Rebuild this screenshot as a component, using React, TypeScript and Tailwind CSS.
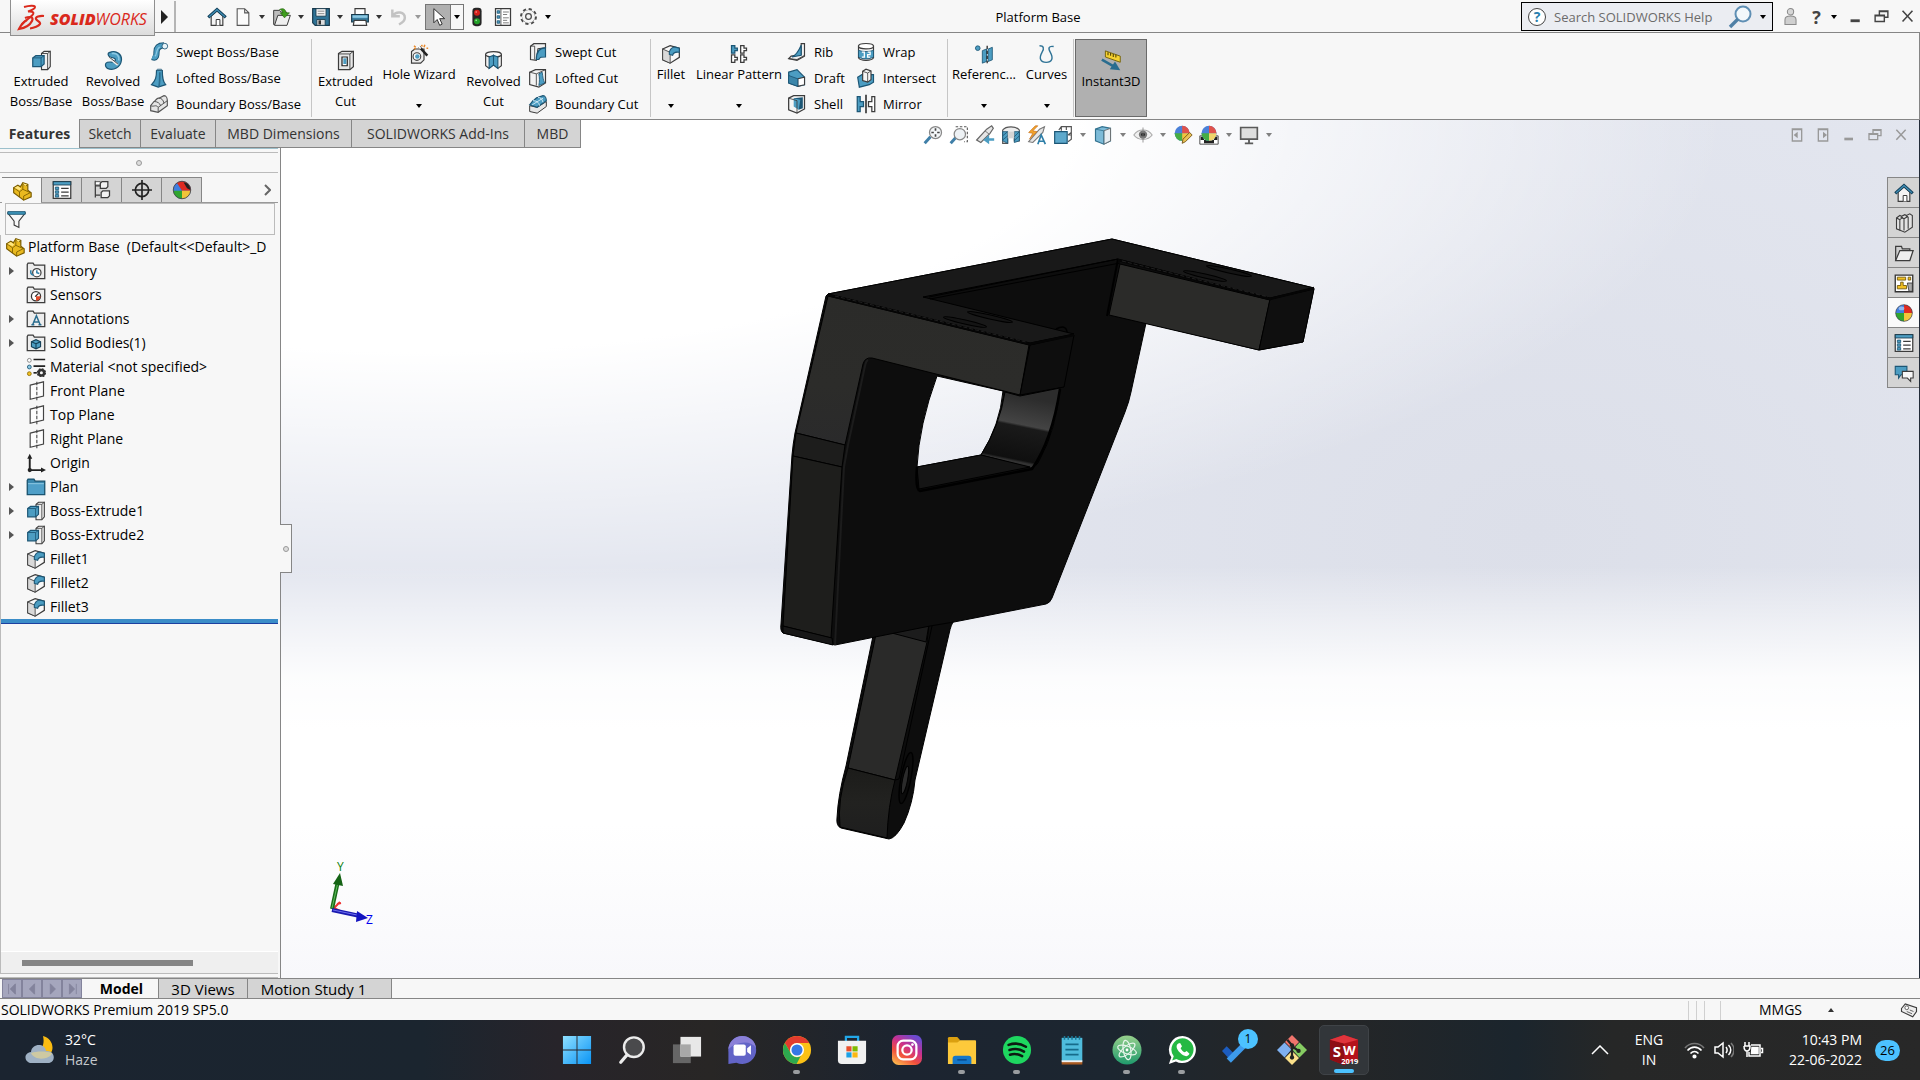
import React from "react";

type IconProps = { name: string; size?: number };

const O = "#3c3c3c";
const B = "#4c9dc2";
const D = "#1c5675";
const L = "#8cc8e2";

const glyphs: Record<string, React.ReactNode> = {
  home: (
    <>
      <path d="M5 11v11h14V11l-7-6z" fill="#f4f4f4" stroke={O} strokeWidth="1.4" />
      <path d="M1.5 12.5L12 3l10.5 9.5" fill="none" stroke="#123f59" strokeWidth="3.6" />
      <path d="M2.5 11.8L12 3.2l9.500 8.600" fill="none" stroke="#3f8db3" strokeWidth="1.5" />
      <path d="M11 22v-7h4.500v7" fill="#fff" stroke={O} strokeWidth="1.2" />
    </>
  ),
  doc: <path d="M5 2h9l5 5v15H5zM14 2v5h5" fill="#fbfbfb" stroke="#555" strokeWidth="1.3" />,
  open: (
    <>
      <path d="M2 21V4h7l2 2h6v15z" fill="#bdbdbd" stroke={O} strokeWidth="1.2" />
      <path d="M3 22l4-12h15l-4 12z" fill="#efefef" stroke={O} strokeWidth="1.2" />
      <path d="M9 3c4-2 7-1 8 4h4l-6 6-5-6h3c0-2-2-4-4-4z" fill="#3f9d1e" stroke="#22630b" strokeWidth=".8" />
    </>
  ),
  save: (
    <>
      <path d="M2 2h20v20H5l-3-3z" fill="#2f7396" stroke="#17384b" strokeWidth="1.4" />
      <path d="M6 2h12v9H6z" fill="#f5f5f5" stroke="#17384b" />
      <path d="M8 5h8M8 8h8" stroke="#777" />
      <path d="M7 15h10v7H7z" fill="#ddd" stroke="#17384b" />
      <path d="M9 16h3v5H9z" fill="#333" />
    </>
  ),
  print: (
    <>
      <path d="M6 2h12v8H6z" fill="#fff" stroke={O} strokeWidth="1.4" />
      <path d="M2 9h20v9H2z" fill="#3a80a3" stroke="#17384b" strokeWidth="1.4" />
      <path d="M3 10h18v3H3z" fill="#8cc8e2" />
      <path d="M5 16h14l1 6H4z" fill="#fff" stroke={O} strokeWidth="1.4" />
    </>
  ),
  undo: <path d="M4 3v8h9M4.500 10.500C9 4 19 6 19 13c0 4-3 6-7 8" fill="none" stroke="#c3c3c3" strokeWidth="3" />,
  cursor: <path d="M7 2v17l4-4 3 7 3-1.500-3-6.500h6z" fill="#fff" stroke="#333" strokeWidth="1.200" />,
  traffic: (
    <>
      <rect x="6.500" y="1" width="11" height="22" rx="4" fill="#262626" />
      <circle cx="12" cy="7" r="3.600" fill="#d4201c" />
      <circle cx="12" cy="17" r="3.600" fill="#24a12a" />
      <circle cx="11" cy="6" r="1" fill="#ff9a90" />
      <circle cx="11" cy="16" r="1" fill="#a5efa5" />
    </>
  ),
  options: (
    <>
      <path d="M3 2h18v20H3z" fill="#fff" stroke={O} strokeWidth="1.500" />
      <path d="M9.500 2v20" stroke={O} />
      <path d="M12 6h7M12 9h5M12 13h7M12 16h5M12 19h7" stroke="#666" />
      <path d="M5 4.500h3v3H5zM5 10.500h3v3H5zM5 16.500h3v3H5z" fill={B} stroke={D} />
    </>
  ),
  gear: (
    <>
      <circle cx="12" cy="12" r="7.800" fill="none" stroke="#4a4a4a" strokeWidth="1.300" />
      <circle cx="12" cy="12" r="9.500" fill="none" stroke="#4a4a4a" strokeWidth="2.400" strokeDasharray="4 3.460" />
      <circle cx="12" cy="12" r="8.200" fill="#f5f5f5" />
      <circle cx="12" cy="12" r="3.600" fill="none" stroke="#4a4a4a" strokeWidth="1.600" />
    </>
  ),
  extrude: (
    <>
      <path d="M12 4l3-2.500h7V19l-3 3.500h-7z" fill="#f0f0f0" stroke={O} strokeWidth="1.300" />
      <path d="M12 4h7v18M19 4l3-2.500" fill="none" stroke={O} />
      <path d="M2 9l3.500-2.500H15V16l-3.500 3H2z" fill={B} stroke={D} strokeWidth="1.400" />
      <path d="M2 9h9.500v10M11.500 9L15 6.500" fill="none" stroke={D} />
    </>
  ),
  revolve: (
    <>
      <path d="M7 3c9-4 15 3 14 9-1 8-9 12-16 9-3-2-3-6 0-7 3-1 8 1 9-2 1-3-3-3-6-4-2-1-3-4-1-5z" fill={B} stroke={D} strokeWidth="1.400" />
      <path d="M10 4c6-1 9 3 8 8" fill="none" stroke={L} strokeWidth="2" />
      <path d="M7 9l10 8" stroke="#eee" strokeWidth="2.500" />
      <path d="M7 8l10 8" stroke="#333" strokeWidth="1" />
    </>
  ),
  sweep: (
    <>
      <path d="M4 18c5 2 5-2 5-6 0-6 4-8 9-8" fill="none" stroke={D} strokeWidth="7.500" />
      <path d="M4 18c5 2 5-2 5-6 0-6 4-8 9-8" fill="none" stroke={B} strokeWidth="5.200" />
      <path d="M7 17c3-1 1-9 6-11" fill="none" stroke={L} strokeWidth="1.500" />
      <circle cx="19" cy="5" r="3.400" fill="#e8f4fa" stroke={D} />
    </>
  ),
  loft: (
    <>
      <path d="M9 3c0 8-1 12-6 17l8 3 9-3c-4-4-4-10-4-17z" fill={B} stroke={D} strokeWidth="1.400" />
      <path d="M9 3h7l-1-1.500h-5z" fill="#eef7fb" stroke={D} />
      <path d="M13 5c0 7 0 12-1 17" fill="none" stroke="#2a6d8f" strokeWidth="2" />
    </>
  ),
  boundary: (
    <>
      <path d="M2 14l4-5c2 0 3-5 6-4l6-3c3 0 4 4 4 6v6l-11 8-9-2z" fill="#e5e5e5" stroke="#555" strokeWidth="1.400" />
      <path d="M2 14c4 2 6-2 9 2v6M11 16l11-8M6 9c4 0 7 2 8 5M12 5c3 0 5 2 6 6" fill="none" stroke="#555" strokeWidth="1.200" />
    </>
  ),
  boundaryCut: (
    <>
      <path d="M2 14l9 2 11-7v6l-11 8-9-2z" fill="#e8e8e8" stroke={O} strokeWidth="1.200" />
      <path d="M2 13l4-5c2 0 3-4 6-4l6-2c3 0 4 4 4 6l-11 8z" fill={B} stroke={D} strokeWidth="1.400" />
      <path d="M6 8c4 0 7 2 8 6M12 4c3 0 5 2 6 6M5 13L18 5" fill="none" stroke="#cde8f4" strokeWidth="1.200" />
    </>
  ),
  extrudeCut: (
    <>
      <path d="M4 4l4-2.500h13V19l-4 3.500H4z" fill="#e8e8e8" stroke={O} strokeWidth="1.400" />
      <path d="M4 4.500h13v18M17 4.500l4-3" fill="none" stroke={O} />
      <path d="M8 8h6v10H8z" fill="#fff" stroke="#222" strokeWidth="1.400" />
      <path d="M9.500 9.500H13V16H9.500z" fill={B} />
    </>
  ),
  wizard: (
    <>
      <path d="M3 9l4-3h11v13l-4 4H3z" fill="#ececec" stroke={O} strokeWidth="1.400" />
      <circle cx="9.500" cy="15" r="4.600" fill="#fff" stroke={O} strokeWidth="1.300" />
      <circle cx="10" cy="15" r="2.700" fill={B} />
      <path d="M12 3l10 11" stroke="#222" strokeWidth="3" />
      <path d="M11 2l3 3.500" stroke="#fff" strokeWidth="2" />
      <path d="M6 2l2 2M15 1l1 2M19 1l-1 3M6 6l2-1M21 5h2" stroke="#e8882a" strokeWidth="1.800" />
    </>
  ),
  revolveCut: (
    <>
      <path d="M3 5v13l4 3 5-4 5 4 4-3V5z" fill="#f1f1f1" stroke={O} strokeWidth="1.300" />
      <ellipse cx="12" cy="5" rx="9" ry="3.200" fill="#fafafa" stroke={O} strokeWidth="1.300" />
      <path d="M7 8l5-2v11l-5 4zM17 8l-5-2v11l5 4z" fill={B} stroke={D} strokeWidth="1.200" />
    </>
  ),
  sweepCut: (
    <>
      <path d="M3 5l4-3h14v5l-9 1-2 14-7-1z" fill="#f1f1f1" stroke={O} strokeWidth="1.400" />
      <path d="M3 5h5v16" fill="none" stroke={O} />
      <path d="M21 7C13 7 10 12 10 21h3c1-3 3-3 8-3z" fill={B} stroke={D} strokeWidth="1.400" />
    </>
  ),
  loftCut: (
    <>
      <path d="M2 5l7-3h12v16l-8 5-11-3z" fill="#f3f3f3" stroke={O} strokeWidth="1.400" />
      <path d="M2 5l8 2v14M10 7l11-5" fill="none" stroke={O} />
      <path d="M13 7l4-2c1 6 1 9 3 13l-7 3c1-5 1-9 0-14z" fill={B} stroke={D} />
    </>
  ),
  fillet: (
    <>
      <path d="M2 6l9-4 11 3v11l-11 7-9-4z" fill="#f8f8f8" stroke={O} strokeWidth="1.500" />
      <path d="M2 6l9 4v13l-9-4z" fill="#d9d9d9" stroke={O} />
      <path d="M10 9.500c1-3.500 4-5.500 6-6L22 5v5c-5-1-7.500 1-8 3.500l-4-1z" fill={B} stroke={D} strokeWidth="1.300" />
    </>
  ),
  pattern: (
    <>
      <path d="M3 2h4v3h3v3H7v3H3z" fill={B} stroke={D} strokeWidth="1.500" />
      <path d="M14 2h4v3h3v3h-3v3h-4zM3 13h4v3h3v3H7v3H3zM14 13h4v3h3v3h-3v3h-4z" fill="#fff" stroke={O} strokeWidth="1.500" />
    </>
  ),
  rib: (
    <>
      <path d="M17 2h4v15l-9 5-10-2 3-3 12-2z" fill="#f2f2f2" stroke={O} strokeWidth="1.400" />
      <path d="M17 4v12L6 18c5-2 8-7 11-14z" fill={B} stroke={D} strokeWidth="1.400" />
      <path d="M2 20l10 1 9-5" fill="none" stroke={O} />
    </>
  ),
  draft: (
    <>
      <path d="M2 5l10-3 9 9v9l-8 2-11-4z" fill={B} stroke={D} strokeWidth="1.500" />
      <path d="M13 13l8-2v9l-8 2z" fill="#fff" stroke={O} strokeWidth="1.300" />
      <path d="M2 9l11 4v9L2 18z" fill="#3b86aa" stroke={D} />
    </>
  ),
  shell: (
    <>
      <path d="M2 5l6-3h13v16l-9 5-10-4z" fill="#f5f5f5" stroke={O} strokeWidth="1.500" />
      <path d="M8 5l11-1v13l-5 2z" fill={D} />
      <path d="M8 5l8 2-2 12-6-4z" fill={B} />
      <path d="M2 5l10 3v15" fill="none" stroke={O} />
    </>
  ),
  wrap: (
    <>
      <path d="M3 5v14c2 4 16 4 18 0V5z" fill="#f1f1f1" stroke={O} strokeWidth="1.400" />
      <ellipse cx="12" cy="5" rx="9" ry="3.200" fill="#fff" stroke={O} strokeWidth="1.400" />
      <path d="M3 10c5 2 13 2 18 0v8c-5 3-13 3-18 0z" fill={B} stroke={D} />
      <path d="M7 12h3v6H7M14 12h3v3h-3v3h3" fill="none" stroke="#fff" strokeWidth="1.500" />
    </>
  ),
  intersect: (
    <>
      <path d="M2 11l5-3h14v9l-5 3-12 3z" fill={B} stroke={D} strokeWidth="1.400" />
      <path d="M8 4l4-2.500 6 2V14l-4 3-6-2z" fill="#f5f5f5" stroke={O} strokeWidth="1.400" />
      <path d="M8 4l6 2v11M14 6l4-2.500" fill="none" stroke={O} />
    </>
  ),
  mirror: (
    <>
      <path d="M1.500 3H5v6h4v6H5v6H1.500z" fill={B} stroke={D} strokeWidth="1.500" />
      <path d="M22.500 3H19v6h-4v6h4v6h3.500z" fill="#fff" stroke={O} strokeWidth="1.500" />
      <path d="M12 1v22" stroke="#222" strokeWidth="1.800" />
    </>
  ),
  refgeo: (
    <>
      <circle cx="4.500" cy="5" r="2.800" fill={B} stroke={D} />
      <path d="M10 8l5-2v15l-5 2zM17 6l5-2v15l-5 2z" fill={B} stroke={D} />
      <path d="M15.800 2v21" stroke="#222" strokeWidth="1.500" strokeDasharray="4 2" />
    </>
  ),
  curves: <path d="M3 2c5 0 6 3 3 8-4 7-2 12 5 12s9-5 5-12c-3-5-2-8 4-7" fill="none" stroke="#2f7396" strokeWidth="1.700" />,
  instant: (
    <>
      <path d="M5 1l17 6v7L5 8z" fill="#f5d130" stroke="#6d5a00" />
      <path d="M8 2.500v3.500M11 3.500v3M14 4.500v3.500M17 5.500v3" stroke="#4a3c00" strokeWidth="1.200" />
      <path d="M1 11l14 8" stroke="#2a6d8f" strokeWidth="3" />
      <path d="M22 23l-12-1 6-9z" fill="#2a6d8f" />
    </>
  ),
  zoomfit: (
    <>
      <path d="M2 22l7-8" stroke="#3f7fa8" strokeWidth="3.500" />
      <circle cx="15" cy="9" r="7.200" fill="#f4f7f9" stroke="#888" strokeWidth="1.500" />
      <path d="M15 4v3M15 11v3M10 9h3M17 9h3" stroke="#444" strokeWidth="2" />
    </>
  ),
  zoomarea: (
    <>
      <path d="M2 22l7-8" stroke="#3f7fa8" strokeWidth="3.500" />
      <circle cx="13" cy="11" r="6.800" fill="#eef2f5" stroke="#888" strokeWidth="1.500" />
      <path d="M8 2h14v18h-4" fill="none" stroke="#555" strokeWidth="1.300" strokeDasharray="3 2" />
    </>
  ),
  prev: (
    <>
      <path d="M2 18L14 5l6-4 2 3-4 6L7 21z" fill="#e6e6e6" stroke="#666" strokeWidth="1.400" />
      <path d="M12 7l5 4" stroke="#666" />
      <path d="M23 16h-6v-4l-7 6 7 5v-4h6z" fill={B} />
    </>
  ),
  section: (
    <>
      <path d="M2 6c4-5 16-5 20 0v13h-6V9H8v13H2z" fill="#ededed" stroke="#555" strokeWidth="1.400" />
      <path d="M2 8h6v14l-6-3zM16 8h6v11l-6 2z" fill={B} stroke={D} />
      <path d="M8 8h8v8H8z" fill="#d5d5d5" />
      <path d="M2 13l6-5M2 18l6-5M16 14l6-6M16 19l6-6" stroke="#1c5675" />
    </>
  ),
  dynview: (
    <>
      <path d="M2 20L15 5l6-3-2 7L7 21z" fill="#e6e6e6" stroke="#777" strokeWidth="1.300" />
      <path d="M10 1L2 9l5 1-4 7 9-9-5-1 6-6z" fill="#f4a52d" stroke="#c46a10" strokeWidth=".8" />
      <path d="M13 23l4-11 5 11M14.500 19.500h6" fill="none" stroke="#2f7fa8" strokeWidth="2" />
    </>
  ),
  orient: (
    <>
      <path d="M7 6l3-4h12v15l-4 3M10 2v5M22 9l-4 3M16 2v4M22 12h-4" fill="none" stroke="#555" strokeWidth="1.400" />
      <path d="M2 8h15v14H2z" fill="#5ea9cc" stroke={D} strokeWidth="1.400" />
    </>
  ),
  display: (
    <>
      <path d="M3 5l8-3 10 2v15l-8 4-10-4z" fill="#7dbbd8" stroke="#32728f" strokeWidth="1.400" />
      <path d="M13 7l8-3v15l-8 4z" fill="#e8eef2" stroke="#666" />
      <path d="M3 5l10 2v16" fill="none" stroke="#32728f" />
    </>
  ),
  eye: (
    <>
      <path d="M1 12c5-8 17-8 22 0-5 7-17 7-22 0z" fill="#f0f0f0" stroke="#aaa" strokeWidth="1.300" />
      <circle cx="12" cy="11.500" r="5" fill="#777" />
      <circle cx="12" cy="11.500" r="2.300" fill="#222" />
      <path d="M12 3v18" stroke="#888" />
    </>
  ),
  ball: (
    <>
      <circle cx="12" cy="12" r="10" fill="#3f7fe0" />
      <path d="M12 12V2a10 10 0 0 1 10 10z" fill="#df2b22" />
      <path d="M12 12H2a10 10 0 0 0 10 10z" fill="#31a52f" />
      <path d="M12 12h10a10 10 0 0 1-10 10z" fill="#f2c53a" />
      <circle cx="12" cy="12" r="10" fill="none" stroke="#444" strokeWidth=".8" />
      <ellipse cx="9" cy="6.500" rx="3.500" ry="2.300" fill="#fff" opacity=".45" />
    </>
  ),
  ballcut: (
    <>
      <circle cx="12" cy="12" r="10.500" fill="#3f7fe0" />
      <path d="M12 13V1.500A10.500 10.500 0 0 0 2 10z" fill="#df2b22" />
      <path d="M12 13V1.500A10.500 10.500 0 0 1 22.500 13z" fill="#df2b22" />
      <path d="M12 13H1.500A10.500 10.500 0 0 1 6 3.500z" fill="#3f7fe0" />
      <path d="M12 13H1.500A10.500 10.500 0 0 0 12 22.500z" fill="#31a52f" />
      <path d="M12 13h10.400A10.500 10.500 0 0 1 12 22.500z" fill="#f2c53a" />
      <path d="M14 3c4 0 8 3 8 9l-4-2z" fill="#222" />
      <circle cx="12" cy="12" r="10.500" fill="none" stroke="#444" />
    </>
  ),
  ballpen: (
    <>
      <circle cx="11" cy="10" r="9" fill="#4a80d8" />
      <path d="M11 10V1a9 9 0 0 1 9 9z" fill="#e0524b" />
      <path d="M11 10H2a9 9 0 0 0 9 9z" fill="#46ad44" />
      <path d="M11 10h9a9 9 0 0 1-9 9z" fill="#f2c53a" />
      <path d="M12 17l8-8 3 3-8 8-4 2z" fill="#e9c255" stroke="#6b4a10" />
    </>
  ),
  ballscene: (
    <>
      <path d="M1 13h22v10H1z" fill="#fff" stroke="#333" />
      <path d="M2 14h4v4H2zM10 18h4v4h-4zM6 18h4v4H6zM18 14h4v4h-4zM14 18h4v4h-4z" fill="#222" />
      <circle cx="12" cy="10" r="9" fill="#4a80d8" />
      <path d="M12 10V1a9 9 0 0 1 9 9z" fill="#e0524b" />
      <path d="M12 10H3a9 9 0 0 0 9 9z" fill="#46ad44" />
      <path d="M12 10h9a9 9 0 0 1-9 9z" fill="#f2d56a" />
    </>
  ),
  monitor: (
    <>
      <path d="M2 3h20v14H2z" fill="#dedede" stroke="#5a5a5a" strokeWidth="2" />
      <path d="M12 17v4M7 22h10" stroke="#5a5a5a" strokeWidth="2.200" />
    </>
  ),
  part: (
    <>
      <path d="M2 8l5-3 3 2 3-5 6 2v7l4 3v5l-9 4-12-9z" fill="#e9b91f" stroke="#7a5c00" strokeWidth="1.400" />
      <path d="M2 8l7 5 4-3V4M9 13v6M13 10l9 4-8 4v5M13 4l6 2" fill="none" stroke="#7a5c00" />
      <path d="M3 8l4-2 4 3-2 2zM13 3l5 1-2 2z" fill="#ffe680" />
    </>
  ),
  props: (
    <>
      <path d="M1.500 2h21v20h-21z" fill="#fff" stroke={O} strokeWidth="1.500" />
      <path d="M1.500 2h21v4h-21z" fill={B} stroke="#17384b" />
      <path d="M4 8.500h4v3H4zM4 13h4v3H4zM4 17.500h4v3H4z" fill={B} stroke={D} />
      <path d="M11 10h9M11 14.500h9M11 19h9" stroke={O} strokeWidth="1.500" />
    </>
  ),
  config: (
    <>
      <path d="M4 1v20M4 7h6M4 18h6" fill="none" stroke={O} strokeWidth="1.500" />
      <path d="M4 2h6v4H4z" fill="#fff" stroke={O} />
      <path d="M10 4l2-2h7v6l-2 2h-7zM11 15l2-2h8v6l-2 2h-8z" fill="#f2f2f2" stroke={O} strokeWidth="1.500" />
    </>
  ),
  target: (
    <>
      <circle cx="12" cy="12" r="8" fill="none" stroke="#222" strokeWidth="2" />
      <path d="M12 0v24M0 12h24" stroke="#222" strokeWidth="2" />
    </>
  ),
  funnel: (
    <>
      <path d="M1 4h22l-8 10v8l-6-3v-5z" fill="#f8f8f8" stroke={O} strokeWidth="1.400" />
      <path d="M1 2h22v3.500H1z" fill="#3d93b8" stroke="#17506c" />
    </>
  ),
  folder: <path d="M1.500 21V4l1-1.500h6L10 5h12.500v16z" fill="#ededed" stroke={O} strokeWidth="1.500" />,
  material: (
    <>
      <circle cx="4" cy="4" r="2.300" fill="#fff" stroke="#777" />
      <circle cx="4" cy="12" r="2.300" fill={L} stroke={D} />
      <circle cx="4" cy="20" r="2.300" fill="#f2c022" stroke="#8a6a00" />
      <path d="M9 3h14M9 11h14" stroke="#222" strokeWidth="2" />
      <path d="M9 19h4" stroke="#222" strokeWidth="2" />
      <circle cx="18.500" cy="19" r="3.300" fill="none" stroke="#333" strokeWidth="3" />
      <circle cx="18.500" cy="19" r="4.800" fill="none" stroke="#333" strokeWidth="1.600" strokeDasharray="2 1.770" />
    </>
  ),
  plane: (
    <>
      <path d="M5 5l16-4v17L5 22z" fill="#fdfdfd" stroke="#444" strokeWidth="1.400" />
      <path d="M13 1v22" stroke="#444" strokeDasharray="4 2" strokeWidth="1.300" />
    </>
  ),
  origin: (
    <>
      <path d="M4.500 5v15.500H20" fill="none" stroke="#222" strokeWidth="2.300" />
      <path d="M1.500 7l3-6 3 6zM18 17.500l6 3-6 3z" fill="#222" />
      <circle cx="4.500" cy="20.500" r="2.500" fill="#222" />
    </>
  ),
  bluefolder: (
    <>
      <path d="M1.500 21V4l1-1.500h7L11 5h11.500v16z" fill="#3a87ad" stroke="#17506c" strokeWidth="1.500" />
      <path d="M2.500 8h19v12.500h-19z" fill="#4f9fc8" />
      <path d="M2.500 8h19" stroke="#9ed4ec" />
    </>
  ),
  books: (
    <>
      <path d="M3 6l4-3 2 1 4-2 2 1 4-2 3 2v14l-9 6-10-4z" fill="#e2e2e2" stroke={O} strokeWidth="1.300" />
      <path d="M3 6l4 2v13M7 8l4-3M8 5l4 2v14M12 7l5-3M14 3l3 2v14" fill="none" stroke={O} strokeWidth="1.300" />
    </>
  ),
  openfolder: (
    <>
      <path d="M2 21V4h7l1 3h9v4" fill="#cfcfcf" stroke={O} strokeWidth="1.500" />
      <path d="M2 21L7 9h16l-4 12z" fill="#efefef" stroke={O} strokeWidth="1.500" />
    </>
  ),
  palette: (
    <>
      <path d="M1.500 2.500h21v20h-21z" fill="#fff" stroke="#333" strokeWidth="1.600" />
      <path d="M4 5h10v3.500H4zM17 5h3v3.500h-3zM8 11h3v4h4v4H4v-4h4z" fill="#f2c022" stroke="#6b5200" />
      <path d="M16 12h6v10h-4z" fill="#aaa" stroke="#333" />
    </>
  ),
  chat: (
    <>
      <path d="M1.500 4h14v10h-7l-3 4v-4h-4z" fill={B} stroke={D} strokeWidth="1.300" />
      <path d="M10 10h13v8h-3v4l-4-4h-6z" fill="#f7f7f7" stroke={O} strokeWidth="1.300" />
    </>
  ),
  tag: (
    <>
      <path d="M2 10L7 4l15 5v5l-5 7-15-7z" fill="#eee" stroke={O} strokeWidth="1.500" />
      <circle cx="9" cy="9" r="2.500" fill="#fff" stroke={O} />
      <path d="M13 12l5 2M9 14l7 3" stroke={O} />
    </>
  ),
  min: <path d="M5 16h13v4H5z" fill="currentColor" />,
  restore: <path d="M9 9V4h12v9h-5M3 10h13v9H3zM9 5h12M3 11h13" fill="none" stroke="currentColor" strokeWidth="2" />,
  close: <path d="M5 4l14 15M19 4L5 19" fill="none" stroke="currentColor" strokeWidth="2.200" />,
  paneL: (
    <>
      <path d="M5 3h14v18H5zM5 4h14" fill="none" stroke="currentColor" strokeWidth="2" />
      <path d="M13 7v10l-6-5z" fill="currentColor" />
    </>
  ),
  paneR: (
    <>
      <path d="M5 3h14v18H5zM5 4h14" fill="none" stroke="currentColor" strokeWidth="2" />
      <path d="M12 7v10l6-5z" fill="currentColor" />
    </>
  ),
  person: (
    <>
      <circle cx="12" cy="6" r="4" fill="#d6d6d6" stroke="#8a8a8a" strokeWidth="1.300" />
      <path d="M5 22v-6c0-6 14-6 14 0v6z" fill="#cfcfcf" stroke="#8a8a8a" strokeWidth="1.300" />
    </>
  ),
  search: (
    <>
      <circle cx="15" cy="9" r="7.500" fill="#f3f8fb" stroke="#5f8fb4" strokeWidth="2" />
      <path d="M2 22l8-8" stroke="#4f80a6" strokeWidth="3.400" />
    </>
  ),
};

const overlays: Record<string, React.ReactNode> = {
  history: (
    <>
      <circle cx="13" cy="14" r="5" fill="#fff" stroke="#444" strokeWidth="1.500" />
      <path d="M13 11v3l3 1M9 17c-3-1-4-3-3-6" fill="none" stroke="#2f7fa8" strokeWidth="1.800" />
    </>
  ),
  sensors: (
    <>
      <circle cx="12" cy="13.500" r="5.500" fill="#fff" stroke="#333" strokeWidth="1.500" />
      <path d="M12 13.500h5.500a5.500 5.500 0 0 1-5.500 5.500z" fill="#e04a2a" />
      <path d="M11 14l4-4" stroke="#222" strokeWidth="1.500" />
    </>
  ),
  annotations: <path d="M8 19l4.500-11L17 19M9.500 15.500h6M6.500 19h3.500M15 19h3.500" fill="none" stroke="#2a6d8f" strokeWidth="1.800" />,
  bodies: (
    <>
      <path d="M6.500 10.500L12 8l5.500 2.500v6L12 19l-5.500-2.500z" fill={B} stroke="#143f57" strokeWidth="1.300" />
      <path d="M6.500 10.500L12 13v6M12 13l5.500-2.500" fill="none" stroke="#143f57" strokeWidth="1.300" />
    </>
  ),
};

function Icon({ name, size = 20 }: IconProps) {
  return (
    <svg width={size} height={size} viewBox="0 0 24 24" className="shrink-0" aria-hidden="true">
      {overlays[name] ? (
        <>
          {glyphs.folder}
          {overlays[name]}
        </>
      ) : (
        glyphs[name]
      )}
    </svg>
  );
}

function Caret({ className = "" }: { className?: string }) {
  return (
    <svg width="6" height="4" viewBox="0 0 6 4" className={className} aria-hidden="true">
      <path d="M0 0h6L3 4z" fill="currentColor" />
    </svg>
  );
}

function Logo() {
  return (
    <div className="relative z-10 ml-[10px] flex h-[36px] w-[145px] shrink-0 items-center gap-1 self-start border border-t-0 border-[#8f8f8f] bg-gradient-to-b from-white to-[#dcdcdc] pl-[5px] text-[#da291c]">
      <svg width="30" height="28" viewBox="0 0 30 28" fill="none" stroke="#da291c" strokeWidth="2" aria-hidden="true">
        <path d="M8 3c5-1.500 11-2 11 0s-4 3.500-7 4.500c5-.5 7 1 4 4-4 4-9 7-10 9" />
        <path d="M9 14c5-2 9-1 7 3s-7 7-13 8c2-4 4-7 8-9" strokeWidth="2.200" />
        <path d="M28 12c-4-.5-9 1-8 3s5 3 4 5-6 4-10 4.500" strokeWidth="2.200" />
      </svg>
      <span className="mt-[3px] whitespace-nowrap text-[16px] leading-5 italic">
        <b className="font-extrabold">SOLID</b>WORKS
      </span>
    </div>
  );
}

type Quick = { icon: string; label: string; caret?: boolean };
const quick: Quick[] = [
  { icon: "doc", label: "New", caret: true },
  { icon: "open", label: "Open", caret: true },
  { icon: "save", label: "Save", caret: true },
  { icon: "print", label: "Print", caret: true },
  { icon: "undo", label: "Undo", caret: true },
];

function TitleBar() {
  return (
    <header className="flex h-[33px] shrink-0 items-center border-b border-[#868686] bg-[#f7f7f7] pt-px">
      <div className="-mt-px self-start">
        <Logo />
      </div>
      <button aria-label="Expand menu" className="flex h-full w-[21px] items-center justify-center border-r-2 border-[#b5b5b5]">
        <svg width="7" height="14" viewBox="0 0 7 14" aria-hidden="true">
          <path d="M0 0l7 7-7 7z" fill="#222" />
        </svg>
      </button>
      <button aria-label="Home" className="ml-7 flex w-[26px] justify-center">
        <Icon name="home" />
      </button>
      {quick.map((q) => (
        <div key={q.label} className="flex w-[39px] items-center">
          <button aria-label={q.label} className="flex w-[26px] justify-center">
            <Icon name={q.icon} />
          </button>
          <button aria-label={`${q.label} options`} className={q.icon === "undo" ? "px-1 py-2 text-[#999]" : "px-1 py-2 text-[#333]"}>
            <Caret />
          </button>
        </div>
      ))}
      <div className="flex h-[26px] w-[39px] items-stretch border border-[#767676]">
        <button aria-label="Select" className="flex w-[25px] items-center justify-center border-r border-[#767676] bg-[#b0b0b0]">
          <Icon name="cursor" />
        </button>
        <button aria-label="Select options" className="flex flex-1 items-center justify-center">
          <Caret />
        </button>
      </div>
      <button aria-label="Rebuild" className="flex w-[26px] justify-center">
        <Icon name="traffic" />
      </button>
      <button aria-label="File properties" className="flex w-[26px] justify-center">
        <Icon name="options" />
      </button>
      <button aria-label="Options" className="flex w-[25px] justify-center">
        <Icon name="gear" size={19} />
      </button>
      <button aria-label="Options menu" className="px-1 py-2">
        <Caret />
      </button>
      <h1 className="flex-1 text-center text-[13px] leading-5">Platform Base</h1>
      <div className="flex h-[29px] w-[252px] items-center border border-black bg-[#ebedf2] px-[6px]">
        <span className="flex size-[18px] items-center justify-center rounded-full border border-[#444] bg-white text-[14px] leading-4 font-bold text-[#2a7fae]">?</span>
        <input aria-label="Search SOLIDWORKS Help" placeholder="Search SOLIDWORKS Help" className="ml-2 w-0 flex-1 bg-transparent text-[13px] leading-5 outline-none placeholder:text-[#6b6b6b]" />
        <button aria-label="Search" className="mr-2">
          <Icon name="search" size={24} />
        </button>
        <button aria-label="Search options">
          <Caret />
        </button>
      </div>
      <button aria-label="Account" className="flex w-[34px] justify-center">
        <Icon name="person" size={19} />
      </button>
      <button aria-label="Help" className="w-[19px] text-center text-[18px] leading-6 font-bold text-[#444]">
        ?
      </button>
      <button aria-label="Help menu" className="flex w-[16px] justify-center">
        <Caret />
      </button>
      <div className="flex text-[#444]">
        {["min", "restore", "close"].map((n) => (
          <button key={n} aria-label={n} className="flex w-[26px] justify-center">
            <Icon name={n} size={17} />
          </button>
        ))}
      </div>
    </header>
  );
}

function Big({ icon, lines, w, menu }: { icon: string; lines: string[]; w: string; menu?: boolean }) {
  return (
    <button className={`flex h-[80px] shrink-0 flex-col items-center ${w} ${menu ? "pt-[6px]" : "pt-[12px]"}`}>
      <Icon name={icon} size={menu ? 20 : 21} />
      <span className="text-[13px] leading-5 whitespace-nowrap">
        {lines.map((l) => (
          <span key={l} className="block">
            {l}
          </span>
        ))}
      </span>
      {menu && <Caret className="mt-auto mb-[10px]" />}
    </button>
  );
}

function Stack({ items, w }: { items: [string, string][]; w: string }) {
  return (
    <div className={`flex shrink-0 flex-col ${w}`}>
      {items.map(([icon, label]) => (
        <button key={label} className="flex h-[26px] items-center gap-[7px] whitespace-nowrap">
          <Icon name={icon} />
          <span className="text-[13px] leading-5">{label}</span>
        </button>
      ))}
    </div>
  );
}

const Sep = () => <div className="h-[78px] w-px shrink-0 bg-[#c6c6c6]" />;

function Ribbon() {
  return (
    <section aria-label="Features" className="flex h-[87px] shrink-0 items-center overflow-hidden border-r border-b border-[#868686] bg-[#f7f7f7] pt-[4px] pl-[5px]">
      <Big icon="extrude" lines={["Extruded", "Boss/Base"]} w="w-[72px]" />
      <Big icon="revolve" lines={["Revolved", "Boss/Base"]} w="w-[72px]" />
      <Stack w="w-[162px]" items={[["sweep", "Swept Boss/Base"], ["loft", "Lofted Boss/Base"], ["boundary", "Boundary Boss/Base"]]} />
      <Sep />
      <Big icon="extrudeCut" lines={["Extruded", "Cut"]} w="w-[67px]" />
      <Big icon="wizard" lines={["Hole Wizard"]} w="w-[80px]" menu />
      <Big icon="revolveCut" lines={["Revolved", "Cut"]} w="w-[69px]" />
      <Stack w="w-[122px]" items={[["sweepCut", "Swept Cut"], ["loftCut", "Lofted Cut"], ["boundaryCut", "Boundary Cut"]]} />
      <Sep />
      <Big icon="fillet" lines={["Fillet"]} w="w-[40px]" menu />
      <Big icon="pattern" lines={["Linear Pattern"]} w="w-[96px]" menu />
      <Stack w="w-[69px]" items={[["rib", "Rib"], ["draft", "Draft"], ["shell", "Shell"]]} />
      <Stack w="w-[91px]" items={[["wrap", "Wrap"], ["intersect", "Intersect"], ["mirror", "Mirror"]]} />
      <Sep />
      <Big icon="refgeo" lines={["Referenc..."]} w="w-[72px]" menu />
      <Big icon="curves" lines={["Curves"]} w="w-[53px]" menu />
      <Sep />
      <button aria-pressed="true" className="ml-px flex h-[78px] w-[72px] shrink-0 flex-col items-center border border-[#6a6a6a] bg-[#b0b0b0] pt-[10px]">
        <Icon name="instant" size={21} />
        <span className="text-[13px] leading-5">Instant3D</span>
      </button>
    </section>
  );
}

const tabs: [string, string][] = [
  ["Sketch", "w-[61px]"],
  ["Evaluate", "w-[75px]"],
  ["MBD Dimensions", "w-[136px]"],
  ["SOLIDWORKS Add-Ins", "w-[173px]"],
  ["MBD", "w-[56px]"],
];

const viewTools: [string, boolean][] = [
  ["zoomfit", false],
  ["zoomarea", false],
  ["prev", false],
  ["section", false],
  ["dynview", false],
  ["orient", true],
  ["display", true],
  ["eye", true],
  ["ballpen", false],
  ["ballscene", true],
  ["monitor", true],
];

function TabStrip() {
  return (
    <div className="flex h-[28px] shrink-0 items-stretch text-[14px] leading-5 text-[#333]">
      <div role="tablist" aria-label="Command tabs" className="-mt-px flex">
        <button role="tab" aria-selected="true" className="w-[80px] border-r border-[#868686] bg-[#f7f7f7] text-[14px] font-bold">
          Features
        </button>
        {tabs.map(([t, w]) => (
          <button key={t} role="tab" aria-selected="false" className={`border border-l-0 border-[#868686] bg-[#d4d4d4] whitespace-nowrap ${w}`}>
            {t}
          </button>
        ))}
      </div>
      <div className="ml-[339px] flex items-center pt-[2px]">
        {viewTools.map(([n, caret]) => (
          <div key={n} className="flex items-center">
            <button aria-label={n} className="flex w-[26px] justify-center">
              <Icon name={n} />
            </button>
            {caret && (
              <button aria-label={`${n} menu`} className="flex w-[14px] justify-center text-[#808080]">
                <Caret />
              </button>
            )}
          </div>
        ))}
      </div>
      <div className="mr-[5px] ml-auto flex items-center pt-[2px] text-[#999]">
        {["paneL", "paneR", "min", "restore", "close"].map((n) => (
          <button key={n} aria-label={n} className="flex w-[26px] justify-center">
            <Icon name={n} size={16} />
          </button>
        ))}
      </div>
    </div>
  );
}

const tree: [string, string, boolean][] = [
  ["history", "History", true],
  ["sensors", "Sensors", false],
  ["annotations", "Annotations", true],
  ["bodies", "Solid Bodies(1)", true],
  ["material", "Material <not specified>", false],
  ["plane", "Front Plane", false],
  ["plane", "Top Plane", false],
  ["plane", "Right Plane", false],
  ["origin", "Origin", false],
  ["bluefolder", "Plan", true],
  ["extrude", "Boss-Extrude1", true],
  ["extrude", "Boss-Extrude2", true],
  ["fillet", "Fillet1", false],
  ["fillet", "Fillet2", false],
  ["fillet", "Fillet3", false],
];

function SidePanel() {
  return (
    <aside className="relative flex w-[281px] shrink-0 flex-col border-r border-[#868686] bg-[#f7f7f7] pr-[2px]">
      <div className="h-[5px] shrink-0 border-t border-b border-t-[#9cc0cc] border-b-[#bbb]" />
      <div className="flex h-[20px] shrink-0 items-center justify-center border-b border-[#bbb]">
        <span className="size-[6px] rounded-full border border-[#999] bg-[#ddd]" />
      </div>
      <div className="mt-1 flex h-[26px] shrink-0 items-stretch border-b border-[#999]">
        <button aria-label="Feature tree" className="-mb-px ml-[2px] flex w-[39px] items-center justify-center border-t border-[#868686] bg-[#f7f7f7]">
          <Icon name="part" />
        </button>
        {["props", "config", "target", "ballcut"].map((n) => (
          <button key={n} aria-label={n} className="flex w-[40px] items-center justify-center border-t border-l border-[#868686] bg-[#d4d4d4]">
            <Icon name={n} />
          </button>
        ))}
        <div className="flex flex-1 items-center justify-end border-l border-[#868686] pr-[7px]">
          <svg width="7" height="12" viewBox="0 0 7 12" fill="none" stroke="#666" strokeWidth="2" aria-hidden="true">
            <path d="M1 1l5 5-5 5" />
          </svg>
        </div>
      </div>
      <label className="mr-[3px] ml-[5px] flex h-[32px] shrink-0 items-center border border-[#bbb] pl-px">
        <Icon name="funnel" size={19} />
        <input aria-label="Filter" className="w-0 flex-1 bg-transparent px-2 text-[13px] outline-none" />
      </label>
      <div className="flex flex-1 flex-col border-l border-[#bbb] text-[14px] leading-6">
        <div className="flex h-[24px] items-center gap-[3px] overflow-hidden pl-1 whitespace-pre">
          <Icon name="part" />
          Platform Base  (Default&lt;&lt;Default&gt;_D
        </div>
        <ul>
          {tree.map(([icon, label, exp]) => (
            <li key={label} className="flex h-[24px] items-center">
              <span className="flex w-[25px] justify-center pr-1">
                {exp && (
                  <svg width="5" height="8" viewBox="0 0 5 8" aria-hidden="true">
                    <path d="M0 0l5 4-5 4z" fill="#555" />
                  </svg>
                )}
              </span>
              <button className="flex items-center gap-1 whitespace-nowrap">
                <Icon name={icon} />
                {label}
              </button>
            </li>
          ))}
        </ul>
        <div className="h-[5px] border-b border-[#1c3fa0] bg-[#3b8dc8]" />
        <div className="mt-auto h-[22px] border-t border-white bg-[#efefef] pt-[8px] pl-[21px]">
          <div className="h-[6px] w-[171px] bg-[#858585]" />
        </div>
      </div>
      <div className="h-[5px] shrink-0 border-t border-b border-[#bbb]" />
      <button aria-label="Collapse panel" className="absolute top-[376px] -right-[12px] flex h-[49px] w-[12px] items-center justify-center border border-l-0 border-[#868686] bg-[#f7f7f7]">
        <span className="size-[6px] rounded-full border border-[#999] bg-[#ddd]" />
      </button>
    </aside>
  );
}

function Model() {
  return (
    <svg width="580" height="640" viewBox="760 220 580 640" className="absolute top-[72px] left-[479px]" role="img" aria-label="Platform Base part">
      <defs>
        <linearGradient id="arm" x1="0" y1="0" x2="0" y2="1">
          <stop offset="0" stopColor="#2b2b29" />
          <stop offset=".6" stopColor="#2c2c2a" />
          <stop offset="1" stopColor="#2a2a2b" />
        </linearGradient>
        <linearGradient id="bore" x1="0" y1="0" x2="-.2" y2="1">
          <stop offset="0" stopColor="#2c2c2c" />
          <stop offset=".34" stopColor="#444" />
          <stop offset=".37" stopColor="#1a1a1a" />
          <stop offset=".77" stopColor="#0f0f0f" />
          <stop offset=".8" stopColor="#333" />
          <stop offset="1" stopColor="#222" />
        </linearGradient>
        <linearGradient id="tip" x1="0" y1="0" x2="0" y2="1">
          <stop offset="0" stopColor="#1c1c1a" />
          <stop offset=".5" stopColor="#222220" />
          <stop offset="1" stopColor="#1e1e1e" />
        </linearGradient>
      </defs>
      <g stroke="#000" strokeWidth="1" strokeLinejoin="round">
        <path d="M873 636L846 766Q838 795 837 818Q836 826 841 828L889 839Q896 838 904 823Q913 803 915 780L949 634Q951 624 954 621L930 622z" fill="#0d0d0d" />
        <path d="M876 634L848 768L895 780L927 642L929 624z" fill="#2a2a29" />
        <path d="M888 632L926 642L929 624z" fill="#1c1c1c" />
        <path d="M848 768L895 780Q888 806 887 838L840 827Q837 800 848 768z" fill="url(#tip)" />
        <path d="M895 780L899 779L932 626" fill="none" />
        <ellipse cx="906" cy="778" rx="5" ry="26" transform="rotate(11 906 778)" fill="#0b0b0b" strokeWidth="1.500" />
        <ellipse cx="905" cy="780" rx="2.500" ry="14" transform="rotate(11 905 780)" fill="#2b2b2b" />
        <path
          fillRule="evenodd"
          d="M828 294L1112 239L1314 288L1303 342L1259 350L1146 323L1131 392Q1129 402 1125 412L1052 598Q1050 603 1046 604L954 622L930 626L835 645L783 633Q780 631 781 624L792 455Q793 444 795 433L826 296zM937 376Q919 425 917 467L981 455Q1000 425 1003 391z"
          fill="#0d0d0d"
        />
        <path d="M828 294L1112 239L1314 288L1270 298L1118 259L923 297L1074 334L1030 343z" fill="#191919" />
        <path d="M1118 259L929 297M1120 263L930 299" fill="none" />
        <path d="M1120 264L1270 300L1259 350L1109 315z" fill="#2b2b29" />
        <path d="M1118 259L1107 316" fill="none" strokeWidth="2" />
        <path d="M1270 299L1314 289L1303 342L1259 350z" fill="#0f0f0f" />
        <path d="M1118 260L1270 299L1314 288" fill="none" stroke="#050505" strokeWidth="2.500" />
        <path d="M1122 261L1268 297" stroke="#333" strokeWidth=".6" strokeDasharray="4 2" />
        <path d="M828 296L1029 345L1020 395L872 358Q865 357 863 364L845 445L796 433z" fill="url(#arm)" />
        <path d="M796 433L845 445L842 467L793 456z" fill="#1d1d1c" />
        <path d="M793 456L842 467L831 638L783 626z" fill="#1e1e1c" />
        <path d="M783 626L832 638L833 645L783 633z" fill="#171717" />
        <path d="M868 360Q866 361 865 366L848 445L844 467L835 645" fill="none" stroke="#1c1c1c" strokeWidth="2" />
        <path d="M1030 345L1074 335L1064 387L1020 395z" fill="#0e0e0e" />
        <path d="M828 295L1030 344L1074 335" fill="none" stroke="#050505" strokeWidth="2.500" />
        <path d="M835 296L1026 342" stroke="#333" strokeWidth=".6" strokeDasharray="4 2" />
        <path d="M1056 329Q1066 324 1067 332" fill="none" strokeWidth="1.500" />
        <path d="M1005 392L1020 396L1060 388Q1056 430 1040 459Q1036 468 1030 468L981 455Q1000 425 1005 392z" fill="url(#bore)" />
        <path d="M917 467L981 455L1030 467L919 489z" fill="#151515" />
        <path d="M917 467Q915 490 920 491L1032 469Q1052 440 1060 389" fill="none" strokeWidth="2.500" />
        <g fill="#141414">
          <ellipse cx="990" cy="317" rx="23" ry="2" transform="rotate(13 990 317)" />
          <ellipse cx="965" cy="322" rx="22" ry="2" transform="rotate(13 965 322)" />
          <ellipse cx="1229" cy="271" rx="23" ry="2" transform="rotate(13 1229 271)" />
          <ellipse cx="1205" cy="276" rx="22" ry="2" transform="rotate(13 1205 276)" />
        </g>
      </g>
    </svg>
  );
}

function Triad() {
  return (
    <svg width="60" height="80" viewBox="320 855 60 80" className="absolute top-[707px] left-[39px]" role="img" aria-label="Axes">
      <path d="M334 908l6-6M332 907l8 4M337 904l4-1" stroke="#e33" strokeWidth="2" />
      <path d="M332 909l6-28" stroke="#1a6b1a" strokeWidth="4" />
      <path d="M332 908l6-26" stroke="#5cc05c" strokeWidth="1" />
      <path d="M333 884l7-11 3 13z" fill="#156315" />
      <path d="M332 910l28 6" stroke="#1a1ab0" strokeWidth="4" />
      <path d="M333 910l24 5" stroke="#7070f0" strokeWidth="1" />
      <path d="M357 911l11 7-12 4z" fill="#1414c0" />
      <text x="337" y="871" fontSize="12" fill="#0a800a">Y</text>
      <text x="366" y="924" fontSize="12" fill="#0000f0">Z</text>
    </svg>
  );
}

const pane = ["home", "books", "openfolder", "palette", "ball", "props", "chat"];

function Viewport() {
  return (
    <main className="relative min-w-0 flex-1 overflow-hidden">
      <Model />
      <Triad />
      <nav aria-label="Task pane" className="absolute top-[29px] right-0 w-[32px] border-t border-l border-[#868686]">
        {pane.map((n) => (
          <button key={n} aria-label={n} className={`flex h-[30px] w-full items-center justify-center border-b border-[#868686] ${n === "ball" ? "bg-[#fafafa]" : "bg-[#d4d4d4]"}`}>
            <Icon name={n} />
          </button>
        ))}
      </nav>
    </main>
  );
}

function BottomTabs() {
  const arrows = ["M3 1v12M11 1v12L5 7z", "M10 1v12L4 7z", "M5 1v12l6-6z", "M4 1v12l6-6zM12 1v12"];
  return (
    <div className="flex h-[21px] shrink-0 items-stretch border-t border-b border-[#868686] bg-[#f7f7f7] text-[15px] leading-[18px]">
      <div className="ml-[2px] flex">
        {arrows.map((d) => (
          <button key={d} aria-label="Scroll tabs" className="flex w-[20px] items-center justify-center border border-[#83839c] bg-[#a5a6bd]">
            <svg width="12" height="12" viewBox="0 0 14 14" aria-hidden="true">
              <path d={d} fill="#83839c" stroke="#83839c" />
            </svg>
          </button>
        ))}
      </div>
      <button className="w-[77px] border-r border-[#868686] pl-[3px] text-[14px] font-bold">Model</button>
      <button className="w-[89px] border-r border-[#868686] bg-[#d4d4d4]">3D Views</button>
      <button className="w-[144px] border-r border-[#868686] bg-[#d4d4d4] pr-3">Motion Study 1</button>
    </div>
  );
}

function StatusBar() {
  return (
    <footer className="flex h-[21px] shrink-0 items-center bg-[#f7f7f7] pt-px text-[14px] leading-5">
      <span className="pl-px">SOLIDWORKS Premium 2019 SP5.0</span>
      <div className="ml-auto flex h-full items-center">
        <div className="mr-[38px] flex h-[19px] w-[33px] border-r border-l border-[#d0d0d0]">
          <div className="ml-[7px] w-[9px] border-r border-l border-[#d0d0d0]" />
        </div>
        <span>MMGS</span>
        <svg width="6" height="4" viewBox="0 0 6 4" className="mx-[26px]" aria-hidden="true">
          <path d="M0 4h6L3 0z" fill="#333" />
        </svg>
        <div className="mr-[2px] ml-[40px]">
          <Icon name="tag" size={18} />
        </div>
      </div>
    </footer>
  );
}

const apps: [string, React.ReactNode, boolean][] = [
  [
    "Start",
    <>
      <defs>
        <linearGradient id="win" x1="0" y1="0" x2="1" y2="1">
          <stop offset="0" stopColor="#8fe0ff" />
          <stop offset="1" stopColor="#0a94f5" />
        </linearGradient>
      </defs>
      <path d="M1 1h14.500v14.500H1zM16.500 1H31v14.500H16.500zM1 16.500h14.500V31H1zM16.500 16.500H31V31H16.500z" fill="url(#win)" />
    </>,
    false,
  ],
  [
    "Search",
    <>
      <circle cx="18" cy="13" r="10.500" fill="#4a4a4c" stroke="#ececec" strokeWidth="2.600" />
      <path d="M10.500 21.500L4 29" stroke="#ececec" strokeWidth="3.400" strokeLinecap="round" />
    </>,
    false,
  ],
  [
    "Task view",
    <>
      <path d="M1 10h19v20H1z" fill="#666" />
      <path d="M9 2h22v21H9z" fill="#e8e8e8" />
      <path d="M9 10h11v13H9z" fill="#a8a8a8" />
    </>,
    false,
  ],
  [
    "Chat",
    <>
      <path d="M16 1a15 15 0 1 1-6 28.700L1.500 31V18A15 15 0 0 1 16 1z" fill="#6264c7" />
      <path d="M16 1a15 15 0 0 1 15 13C26 6 12 6 1.500 15A15 15 0 0 1 16 1z" fill="#8a80d8" />
      <rect x="7" y="10" width="13" height="12" rx="2" fill="#fff" />
      <path d="M21.500 14l4-3v10l-4-3z" fill="#fff" />
    </>,
    false,
  ],
  [
    "Chrome",
    <>
      <circle cx="16" cy="16" r="15" fill="#fbc116" />
      <path d="M3 8.500A15 15 0 0 1 29 8.500H16a7.500 7.500 0 0 0-6.500 11z" fill="#e33b2e" />
      <path d="M3 8.500l6.600 11.300A7.500 7.500 0 0 0 20 22.500L15.500 31A15 15 0 0 1 3 8.500z" fill="#2da94f" />
      <circle cx="16" cy="16" r="7.500" fill="#fff" />
      <circle cx="16" cy="16" r="5.900" fill="#3578e5" />
    </>,
    true,
  ],
  [
    "Store",
    <>
      <path d="M9.500 8V2h13v6" fill="none" stroke="#22a7e8" strokeWidth="2.400" />
      <path d="M1 6h30v21q0 4-4 4H5q-4 0-4-4z" fill="#f1f1f1" />
      <path d="M10 12h5.500v5.500H10z" fill="#e8502c" />
      <path d="M16.500 12H22v5.500h-5.500z" fill="#7fba00" />
      <path d="M10 18.500h5.500V24H10z" fill="#1ba1e6" />
      <path d="M16.500 18.500H22V24h-5.500z" fill="#fcb813" />
    </>,
    false,
  ],
  [
    "Instagram",
    <>
      <defs>
        <linearGradient id="insta" x1=".1" y1="1" x2=".7" y2="0">
          <stop offset="0" stopColor="#fdc34f" />
          <stop offset=".35" stopColor="#f2503c" />
          <stop offset=".65" stopColor="#c9308f" />
          <stop offset="1" stopColor="#6a4bd0" />
        </linearGradient>
      </defs>
      <rect x="0" y="0" width="32" height="32" rx="7" fill="url(#insta)" />
      <rect x="6" y="6" width="20" height="20" rx="6" fill="none" stroke="#fff" strokeWidth="2.400" />
      <circle cx="16" cy="16" r="5" fill="none" stroke="#fff" strokeWidth="2.400" />
      <circle cx="21.800" cy="10.200" r="1.400" fill="#fff" />
    </>,
    false,
  ],
  [
    "File Explorer",
    <>
      <path d="M1 7V3.500Q1 2 2.500 2H11l3 3.500L11 9H1z" fill="#dba010" />
      <path d="M1 8h10l3-2.500h16q1 0 1 1.500v24H1z" fill="#fdc93b" />
      <path d="M6 31v-6q0-3 3-3h14q3 0 3 3v6z" fill="#1577c9" />
      <path d="M11 26.500h10" stroke="#0a4f93" strokeWidth="1.800" />
    </>,
    true,
  ],
  [
    "Spotify",
    <>
      <circle cx="16" cy="16" r="15" fill="#1ed760" />
      <path d="M7 10.500c6-2 13-1.500 18.500 2M8 16c5-1.600 11-1 15.500 1.800M8.500 21c4.500-1.300 9-.8 13 1.600" fill="none" stroke="#0d1a12" strokeWidth="2.700" strokeLinecap="round" />
    </>,
    true,
  ],
  [
    "Notepad",
    <>
      <path d="M5 28h22v3.500H5z" fill="#a85a20" />
      <path d="M5 3h22v25H5z" fill="#4fbcdc" />
      <path d="M5 27h22v2H5z" fill="#f1f1f1" />
      <path d="M8 1v4M12 1v4M16 1v4M20 1v4M24 1v4" stroke="#1a7795" strokeWidth="1.600" />
      <path d="M9 10h14M9 15.500h14M9 21h14" stroke="#166b8a" strokeWidth="1.800" />
    </>,
    false,
  ],
  [
    "Atom",
    <>
      <defs>
        <linearGradient id="atom" x1="0" y1="0" x2="0" y2="1">
          <stop offset="0" stopColor="#97d08c" />
          <stop offset="1" stopColor="#1f9a6c" />
        </linearGradient>
      </defs>
      <circle cx="16" cy="16" r="15.500" fill="url(#atom)" />
      <g fill="none" stroke="#e6f5ea" strokeWidth="1.300">
        <ellipse cx="16" cy="16" rx="10.500" ry="4" transform="rotate(20 16 16)" />
        <ellipse cx="16" cy="16" rx="10.500" ry="4" transform="rotate(80 16 16)" />
        <ellipse cx="16" cy="16" rx="10.500" ry="4" transform="rotate(140 16 16)" />
      </g>
      <circle cx="16" cy="16" r="1.500" fill="#fff" />
    </>,
    true,
  ],
  [
    "WhatsApp",
    <>
      <path d="M16.500 1A14.500 14.500 0 1 1 9.500 28.300L2 31l2.600-7.400A14.500 14.500 0 0 1 16.500 1z" fill="#fff" />
      <path d="M16.500 3.500A12 12 0 1 1 10 25.700L5.500 27.300l1.700-4.600A12 12 0 0 1 16.500 3.500z" fill="#25b944" />
      <path d="M12 9c-3 2-2 6 2 10s8 5 10 1l-3-3-2 1.500c-2-1-3.500-2.500-4.500-4.500L16 12l-2-3.500z" fill="#fff" />
    </>,
    true,
  ],
  [
    "To Do",
    <>
      <path d="M0 17l5-5 9 9-5 6z" fill="#1c5cbf" />
      <path d="M9.500 29.500L5 25 23 7l5 4z" fill="#3d9bec" />
    </>,
    false,
  ],
  [
    "Git",
    <>
      <path d="M16 0l7.500 7.500L16 15 8.500 7.500z" fill="#f0746c" />
      <path d="M8 8l7.500 7.500L8 24l-8-8z" fill="#7fb0f0" />
      <path d="M24 8l8 8-8 8-7.500-8z" fill="#86cc62" />
      <path d="M16 17l7.500 7.500L16 32l-7.500-7.500z" fill="#fbe08a" />
      <path d="M11 5l5 6v14M16 12l7 5" fill="none" stroke="#222" strokeWidth="2.400" />
      <circle cx="16" cy="11" r="2.300" fill="#222" />
      <circle cx="23" cy="17" r="2.300" fill="#222" />
      <circle cx="16" cy="24" r="2.300" fill="#222" />
    </>,
    false,
  ],
];

function Weather() {
  return (
    <button className="ml-[25px] flex items-center gap-[10px] justify-self-start text-left">
      <svg width="30" height="28" viewBox="0 0 30 28" aria-hidden="true">
        <path d="M18 0c12 3 13 19 1 21-6 0-9-3-10-6 8 1 11-7 9-15z" fill="#fbbc12" />
        <path d="M7 27C-1 27-2 17 6 16c1-9 14-9 15-1 10-1 10 12 2 12z" fill="#9fb1c4" />
        <path d="M6 17c6-2 15-2 21 0-1 6-17 9-21 0z" fill="#d9cf9a" opacity=".8" />
      </svg>
      <span className="text-[14px] leading-5 text-white">
        32°C
        <span className="block text-[#c4c8cc]">Haze</span>
      </span>
    </button>
  );
}

function Taskbar() {
  return (
    <div className="grid h-[60px] shrink-0 grid-cols-[1fr_auto_1fr] items-center bg-[linear-gradient(to_right,#1b2430_0%,#1b252f_22%,#27242a_29%,#282625_37%,#1c2430_47%,#1c2630_58%,#262626_68%,#1b252d_79%,#262727_84%,#282828_100%)]">
      <Weather />
      <div className="flex h-full items-center pr-[2px]">
        {apps.map(([name, art, running]) => (
          <button key={name} aria-label={name} className="relative flex h-full w-[55px] items-center justify-center">
            <svg width="30" height="30" viewBox="0 0 32 32" aria-hidden="true">
              {art}
            </svg>
            {running && <span className="absolute bottom-[6px] h-[4px] w-[7px] rounded-full bg-[#9a9da0]" />}
            {name === "To Do" && <span className="absolute top-[9px] right-[6px] flex size-[20px] items-center justify-center rounded-full bg-[#4cc2ff] text-[12px] leading-4 text-black">1</span>}
          </button>
        ))}
        <button aria-label="SOLIDWORKS 2019" className="relative flex h-[50px] w-[50px] items-center justify-center rounded-[5px] border border-[#3f4347] bg-[#32363a]">
          <svg width="30" height="30" viewBox="0 0 32 32" aria-hidden="true">
            <path d="M1 5L16 0l15 5v21l-15 6-15-6z" fill="#b5121b" />
            <path d="M1 5l15 4v23L1 26z" fill="#8e0d14" />
            <path d="M1 5L16 0l15 5-15 4z" fill="#e0343c" />
            <text x="4" y="23" fontSize="16" fontWeight="700" fill="#fff">S</text>
            <text x="15" y="21" fontSize="14" fontWeight="700" fill="#fff">W</text>
            <text x="13" y="31" fontSize="8" fontWeight="700" fill="#fff">2019</text>
          </svg>
          <span className="absolute bottom-px h-[4px] w-[20px] rounded-full bg-[#4cc2ff]" />
        </button>
      </div>
      <div className="flex items-center justify-end pr-[20px] text-[14px] leading-5 text-white">
        <button aria-label="Show hidden icons">
          <svg width="18" height="10" viewBox="0 0 18 10" fill="none" stroke="#fff" strokeWidth="1.500" aria-hidden="true">
            <path d="M1 9l8-8 8 8" />
          </svg>
        </button>
        <button className="ml-[24px] w-[32px] text-center">ENG IN</button>
        <button aria-label="Network, volume and battery" className="ml-[19px] flex items-center gap-[9px]">
          <svg width="21" height="18" viewBox="0 0 21 18" fill="none" stroke="#fff" strokeWidth="1.600" aria-hidden="true">
            <path d="M1 7c5-6 14-6 19 0" stroke="#777" />
            <path d="M3.500 9.500c4-4.500 10-4.500 14 0M6.500 12.500c2.500-2.600 5.500-2.600 8 0" />
            <circle cx="10.500" cy="15.500" r="1.300" fill="#fff" />
          </svg>
          <svg width="20" height="18" viewBox="0 0 20 18" fill="none" stroke="#fff" strokeWidth="1.500" aria-hidden="true">
            <path d="M1 6h3l5-4v14l-5-4H1zM12 6c1.500 2 1.500 4 0 6M14.500 4c3 3 3 7 0 10" />
            <path d="M17 2c4 4 4 10 0 14" stroke="#777" />
          </svg>
          <svg width="21" height="18" viewBox="0 0 21 18" fill="none" stroke="#fff" strokeWidth="1.500" aria-hidden="true">
            <path d="M8 4h9v11H6v-4M18 7.500h1.500v4H18M2 1v4M6 1v4M1 5h6c0 4-1 5-3 5s-3-1-3-5M4 10v6" />
            <path d="M9 6.500h6v6H8.500z" fill="#fff" />
          </svg>
        </button>
        <button className="ml-[14px] w-[84px] text-right whitespace-nowrap">
          10:43 PM
          <span className="block">22-06-2022</span>
        </button>
        <span className="ml-[13px] flex h-[21px] w-[25px] items-center justify-center rounded-full bg-[#4cc2ff] text-[13px] text-black">26</span>
      </div>
    </div>
  );
}

export default function App() {
  return (
    <div className="flex min-h-screen flex-col overflow-hidden bg-[#f7f7f7] font-['Open_Sans','Noto_Sans',sans-serif] text-black">
      <TitleBar />
      <Ribbon />
      <div className="flex flex-1 flex-col border-r border-[#222b38] bg-[linear-gradient(to_bottom,transparent_52%,rgba(255,255,255,.5)_59%,rgba(255,255,255,.9)_65%,#fff_71%,#fff_82%,#f8f8fb_100%),radial-gradient(ellipse_68%_54%_at_22%_0%,#fff_50%,transparent_100%),radial-gradient(ellipse_40%_60%_at_80%_48%,#dcdfe9_0%,#e3e6ef_100%)]">
        <TabStrip />
        <div className="flex flex-1">
          <SidePanel />
          <Viewport />
        </div>
      </div>
      <BottomTabs />
      <StatusBar />
      <Taskbar />
    </div>
  );
}
